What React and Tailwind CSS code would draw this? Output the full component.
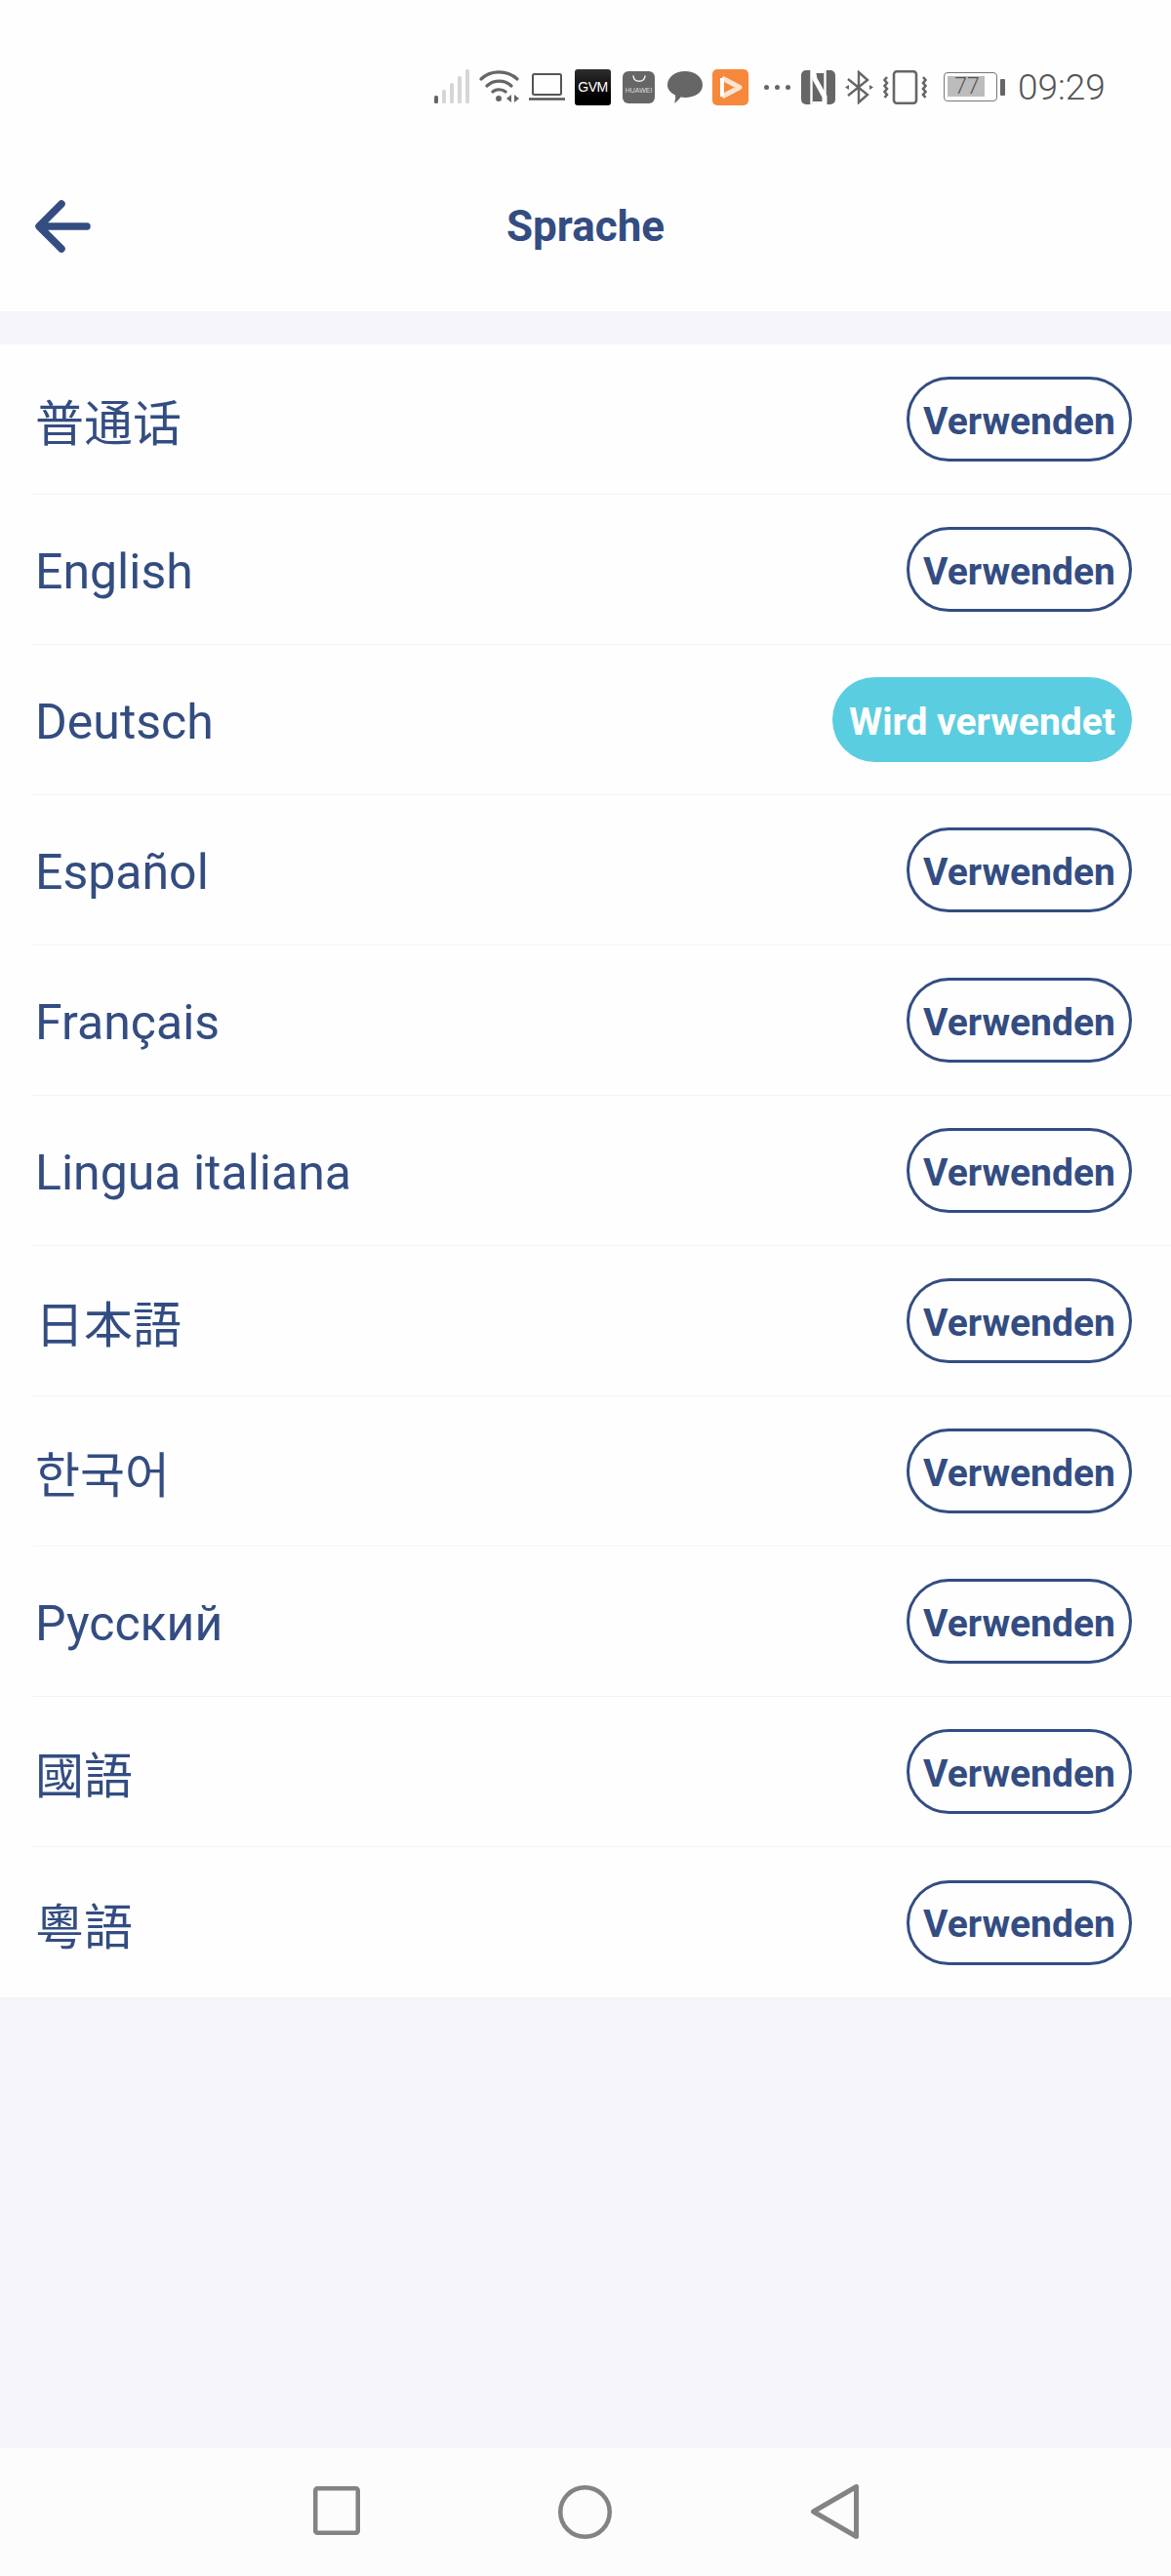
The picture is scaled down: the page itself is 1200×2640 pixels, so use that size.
const NAVY = "#334d82";
const LANGS = [
  ["普通话", "zh"],
  ["English"],
  ["Deutsch", null, true],
  ["Español"],
  ["Français"],
  ["Lingua italiana"],
  ["日本語", "ja"],
  ["한국어", "ko"],
  ["Русский"],
  ["國語", "tc"],
  ["粵語", "tc"],
];
const FONT = {
  zh: "font-['Noto_Sans_CJK_SC',sans-serif] -mt-[4px]",
  ja: "font-['Noto_Sans_CJK_JP',sans-serif] -mt-[4px]",
  ko: "font-['Noto_Sans_CJK_KR',sans-serif] -mt-[4px]",
  tc: "font-['Noto_Sans_CJK_TC',sans-serif] -mt-[4px]",
};

function StatusBar() {
  return (
    <div className="h-[176px] flex items-center pl-[445px] pt-[2px]">
      <svg width="36" height="36" viewBox="0 0 36 36">
        <rect x="0" y="27" width="4" height="8" rx="1.5" fill="#666" />
        <rect x="8" y="21" width="4" height="14" rx="1.5" fill="#d6d6d6" />
        <rect x="16" y="14" width="4" height="21" rx="1.5" fill="#d6d6d6" />
        <rect x="24" y="7" width="4" height="28" rx="1.5" fill="#d6d6d6" />
        <rect x="32" y="0" width="4" height="35" rx="1.5" fill="#d6d6d6" />
      </svg>
      <svg className="ml-[10px]" width="41" height="34" viewBox="0 0 41 34" fill="none" stroke="#666" strokeWidth="3.2" strokeLinecap="round">
        <path d="M2 9C12 -0.5 29 -0.5 39 9" />
        <path d="M8 16C15 9.5 26 9.5 33 16" />
        <path d="M14 22C17.5 19 23.5 19 27 22" />
        <circle cx="20" cy="29" r="3" fill="#666" stroke="none" />
        <path d="M33 25L28 29L33 33Z" fill="#666" stroke="none" />
        <path d="M36 25L41 29L36 33Z" fill="#666" stroke="none" />
      </svg>
      <svg className="ml-[10px]" width="37" height="30" viewBox="0 0 37 30" fill="none" stroke="#555" strokeWidth="2">
        <rect x="4" y="2" width="29" height="21" rx="1.5" />
        <path d="M0 27.5H37" strokeWidth="2.6" />
      </svg>
      <div className="ml-[10px] w-[37px] h-[37px] rounded-[3px] bg-gradient-to-b from-[#2e2e2e] via-[#111] to-[#000] flex items-center justify-center text-white text-[14px] leading-none font-['Liberation_Sans',sans-serif] tracking-[-0.5px]">GVM</div>
      <div className="ml-[12px] relative w-[33px] h-[33px] rounded-[6px] bg-[#666] flex flex-col items-center text-[#ddd] text-[7px] leading-none font-['Liberation_Sans',sans-serif]">
        <svg className="mt-[4px]" width="14" height="8" viewBox="0 0 14 8" fill="none" stroke="#eee" strokeWidth="1.5" strokeLinecap="round">
          <path d="M1 1C2 8 12 8 13 1" />
        </svg>
        <span className="mt-[4px]">HUAWEI</span>
      </div>
      <svg className="ml-[13px]" width="36" height="33" viewBox="0 0 36 33">
        <path d="M18 0C28 0 36 6 36 14C36 22 28 27 18 27C16.5 27 15 27 13.5 26.6C11.5 29.5 9 32 7 32.5C8 30 8.5 27.5 8 24.5C3 22 0 18.5 0 14C0 6 8 0 18 0Z" fill="#666" />
      </svg>
      <svg className="ml-[10px]" width="37" height="37" viewBox="0 0 37 37">
        <rect width="37" height="37" rx="5" fill="#f5883b" />
        <path d="M10 9L28 18.5L10 28" fill="none" stroke="#fde3d0" strokeWidth="5" strokeLinejoin="round" />
        <path d="M10 9V28" stroke="#fff" strokeWidth="4" />
      </svg>
      <div className="ml-[16px] flex gap-[6px]">
        <span className="w-[5px] h-[5px] rounded-full bg-[#666]" />
        <span className="w-[5px] h-[5px] rounded-full bg-[#666]" />
        <span className="w-[5px] h-[5px] rounded-full bg-[#666]" />
      </div>
      <svg className="ml-[11px]" width="35" height="35" viewBox="0 0 35 35">
        <rect width="35" height="35" rx="5" fill="#666" />
        <path d="M10.5 0V35M24.5 0V35" stroke="#fff" strokeWidth="2.4" />
        <path d="M12 -2L14 9L24 27V37" fill="none" stroke="#fff" strokeWidth="5" />
        <path d="M11.5 0H23.5V3H11.5ZM11.5 32H23.5V35H11.5Z" fill="#fff" />
      </svg>
      <svg className="ml-[10px]" width="29" height="35" viewBox="0 0 29 35" fill="none" stroke="#666" strokeWidth="2.4">
        <path d="M3 9L23 25L14 33V2L23 10L3 26" />
        <path d="M0 17.5L4 15V20Z" fill="#666" stroke="none" />
        <path d="M29 17.5L25 15V20Z" fill="#666" stroke="none" />
      </svg>
      <svg className="ml-[10px]" width="45" height="35" viewBox="0 0 45 35" fill="none" stroke="#666">
        <rect x="11" y="1.2" width="23" height="32.6" rx="3" strokeWidth="2.6" />
        <path d="M4 7L1.5 10L4 13L1.5 16L4 19L1.5 22L4 25L1.5 28" strokeWidth="2.6" />
        <path d="M41 7L43.5 10L41 13L43.5 16L41 19L43.5 22L41 25L43.5 28" strokeWidth="2.6" />
      </svg>
      <div className="ml-[17px] flex items-center">
        <div className="relative w-[55px] h-[30px] rounded-[4px] border-[1.5px] border-[#777] p-[3px]">
          <div className="w-[38px] h-[21px] bg-[#bcbcbc]" />
          <div className="absolute left-[8px] top-[2px] w-[30px] text-[23px] leading-[23px] text-[#555] font-['Roboto',sans-serif] font-light text-center">77</div>
        </div>
        <div className="ml-[3px] w-[5px] h-[17px] bg-[#666] rounded-[1px]" />
      </div>
      <div className="ml-[13px] text-[37px] leading-none text-[#555] font-['Roboto',sans-serif] font-light">09:29</div>
    </div>
  );
}

function Row({ name, lang, active, last }) {
  return (
    <div className="pl-[36px] h-[154px] flex flex-col">
      <div className={`flex-1 flex items-center justify-between pr-[40px] ${last ? "" : "border-b border-[#f3f3f6] -ml-[3px] pl-[3px]"}`}>
        <span className={`text-[50px] leading-none pt-[5px] ${lang ? FONT[lang] : ""}`} style={{ color: NAVY }}>{name}</span>
        {active ? (
          <span className="h-[87px] w-[307px] pt-[5px] rounded-full bg-[#5bcde0] flex items-center justify-center text-white text-[39px] font-bold">Wird verwendet</span>
        ) : (
          <span className="h-[87px] w-[231px] pt-[5px] rounded-full border-[3px] border-[#334d82] text-[#334d82] flex items-center justify-center text-[39px] font-bold">Verwenden</span>
        )}
      </div>
    </div>
  );
}

export default function App() {
  return (
    <div className="w-[1200px] h-[2640px] flex flex-col bg-[#f4f4f9] font-['Roboto',sans-serif] overflow-hidden">
      <header className="h-[319px] bg-[#fefefe] shrink-0">
        <StatusBar />
        <div className="h-[112px] flex items-center">
          <div className="flex-1">
            <svg className="ml-[36px]" width="58" height="54" viewBox="0 0 58 54" fill="none" stroke="#334d82" strokeWidth="7.5" strokeLinecap="round" strokeLinejoin="round">
              <path d="M53 27H5M27 4L4 27L27 50" />
            </svg>
          </div>
          <div className="text-[44px] font-bold text-[#334d82] leading-none">Sprache</div>
          <div className="flex-1" />
        </div>
      </header>
      <div className="mt-[34px] bg-[#fefefe] shrink-0">
        {LANGS.map(([name, lang, active], i) => (
          <Row key={name} name={name} lang={lang} active={active} last={i === LANGS.length - 1} />
        ))}
      </div>
      <div className="flex-1" />
      <nav className="h-[131px] shrink-0 bg-[#fcfcfc] flex items-start pt-[39px]">
        <svg className="ml-[321px]" width="48" height="50" viewBox="0 0 48 50" fill="none" stroke="#838383" strokeWidth="4.5">
          <rect x="2.25" y="2.25" width="43.5" height="45.5" rx="2" />
        </svg>
        <svg className="ml-[203px] -mt-[1px]" width="55" height="55" viewBox="0 0 55 55" fill="none" stroke="#838383" strokeWidth="4.5">
          <circle cx="27.5" cy="27.5" r="25.25" />
        </svg>
        <svg className="ml-[204px] -mt-[2px]" width="49" height="56" viewBox="0 0 49 56" fill="none" stroke="#838383" strokeWidth="5" strokeLinejoin="round">
          <path d="M46.5 2.5V53.5L2.5 28Z" />
        </svg>
      </nav>
    </div>
  );
}
